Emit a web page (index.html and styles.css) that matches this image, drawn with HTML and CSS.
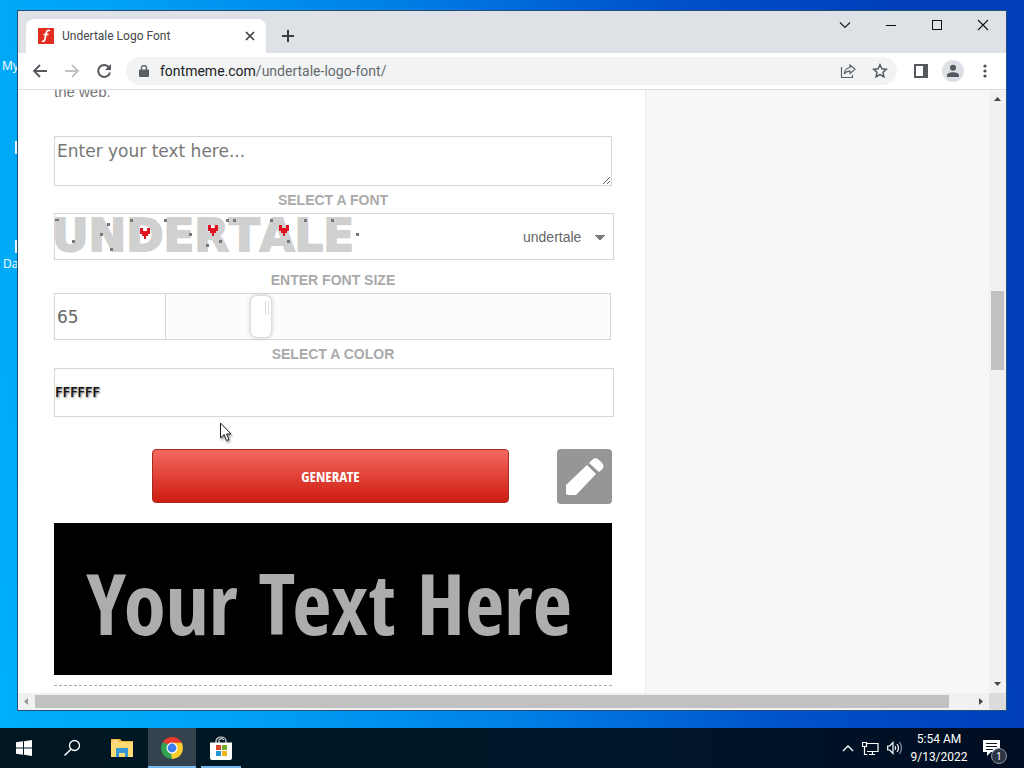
FILE: index.html
```html
<!DOCTYPE html>
<html lang="en">
<head>
<meta charset="utf-8">
<title>Undertale Logo Font</title>
<link rel="stylesheet" href="styles.css">
</head>
<body>
<div class="desktop">
  <span class="desk-label desk-first">My</span>
  <span class="desk-file desk-file-a"></span>
  <span class="desk-file desk-file-b"></span>
  <span class="desk-label desk-second">Da</span>

  <section class="window">
    <header class="tabstrip">
      <div class="tab">
        <svg class="favicon" width="16" height="16" viewBox="0 0 16 16"><rect width="16" height="16" fill="#e02f1f"/><path d="M12 2.800C9.400 1.600 8.500 3.500 8 6L7 11c-.4 2-1.200 2.900-3 2M5.500 6.500h5" fill="none" stroke="#fff" stroke-width="1.700"/></svg>
        <span class="tab-title">Undertale Logo Font</span>
        <button class="icon-btn tab-close" aria-label="Close tab"><svg width="10" height="10" viewBox="0 0 10 10"><path d="M1 1l8 8M9 1L1 9" stroke="#3c4043" stroke-width="1.700"/></svg></button>
      </div>
      <button class="icon-btn new-tab" aria-label="New tab"><svg width="12" height="12" viewBox="0 0 12 12"><path d="M6 0v12M0 6h12" stroke="#3c4043" stroke-width="2"/></svg></button>
      <div class="caption">
        <button class="icon-btn" aria-label="Search tabs"><svg width="12" height="12" viewBox="0 0 12 12"><path d="M1 3.500l5 5 5-5" fill="none" stroke="#222" stroke-width="1.200"/></svg></button>
        <button class="icon-btn" aria-label="Minimize"><svg width="12" height="12" viewBox="0 0 12 12"><path d="M1 6.500h10" stroke="#111"/></svg></button>
        <button class="icon-btn" aria-label="Maximize"><svg width="12" height="12" viewBox="0 0 12 12"><rect x="1.500" y="1.500" width="9" height="9" fill="none" stroke="#111"/></svg></button>
        <button class="icon-btn" aria-label="Close"><svg width="12" height="12" viewBox="0 0 12 12"><path d="M1 1l10 10M11 1L1 11" stroke="#111" stroke-width="1.100"/></svg></button>
      </div>
    </header>

    <nav class="toolbar">
      <button class="icon-btn tool" aria-label="Back"><svg width="16" height="16" viewBox="0 0 16 16"><path d="M15 8H2M8 2L2 8l6 6" fill="none" stroke="#55585c" stroke-width="1.800"/></svg></button>
      <button class="icon-btn tool" aria-label="Forward"><svg width="16" height="16" viewBox="0 0 16 16"><path d="M1 8h13M8 2l6 6-6 6" fill="none" stroke="#bfc1c4" stroke-width="1.800"/></svg></button>
      <button class="icon-btn tool" aria-label="Reload"><svg width="16" height="16" viewBox="0 0 16 16"><path d="M13.200 4.600A6 6 0 1 0 14 9.500" fill="none" stroke="#55585c" stroke-width="2"/><path d="M15 1v6H9z" fill="#55585c"/></svg></button>
      <div class="omnibox">
        <svg width="10" height="12" viewBox="0 0 10 12"><path d="M1 4.500h8a1 1 0 0 1 1 1V11a1 1 0 0 1-1 1H1a1 1 0 0 1-1-1V5.500a1 1 0 0 1 1-1z" fill="#5a5d61"/><path d="M2.500 5V3a2.500 2.500 0 0 1 5 0v2" fill="none" stroke="#5a5d61" stroke-width="1.300"/></svg>
        <span class="url">fontmeme.com<span class="path">/undertale-logo-font/</span></span>
        <button class="icon-btn share" aria-label="Share"><svg width="16" height="16" viewBox="0 0 16 16"><path d="M1.500 4v10.500h11V12" fill="none" stroke="#5f6368" stroke-width="1.200"/><path d="M10 2l5 4.200-5 4.200V8.200C7 8 5.500 9 4.200 11 4.500 7.500 6.500 5 10 4.500z" fill="none" stroke="#5f6368" stroke-width="1.200"/></svg></button>
        <button class="icon-btn star" aria-label="Bookmark"><svg width="16" height="16" viewBox="0 0 16 16"><path d="M8 1.800l1.900 4 4.400.5-3.300 3 .9 4.400L8 11.500l-3.900 2.200.9-4.400-3.300-3 4.400-.5z" fill="none" stroke="#55585c" stroke-width="1.500"/></svg></button>
      </div>
      <button class="icon-btn tool" aria-label="Side panel"><svg width="14" height="14" viewBox="0 0 14 14"><path d="M1 1h12v12H1z" fill="none" stroke="#55585c" stroke-width="2"/><path d="M9 1h4v12H9z" fill="#55585c"/></svg></button>
      <button class="icon-btn tool" aria-label="Profile"><svg width="22" height="22" viewBox="0 0 22 22"><circle cx="11" cy="11" r="11" fill="#dfe0e6"/><circle cx="11" cy="7.800" r="3" fill="#55585f"/><path d="M5 17v-1.800c0-2 3-3 6-3s6 1 6 3V17z" fill="#55585f"/></svg></button>
      <button class="icon-btn tool" aria-label="Menu"><svg width="4" height="14" viewBox="0 0 4 14"><g fill="#4c4f53"><circle cx="2" cy="2" r="1.600"/><circle cx="2" cy="7" r="1.600"/><circle cx="2" cy="12" r="1.600"/></g></svg></button>
    </nav>

    <div class="viewport">
      <div class="page">
        <main class="main">
          <p class="intro">the web.</p>
          <textarea class="box entry" aria-label="Text" placeholder="Enter your text here..."></textarea>
          <label class="heading" for="font">SELECT A FONT</label>
          <div class="box font-field">
            <div class="preview">UNDERTALE
              <svg class="hearts" width="306" height="34" viewBox="0 0 306 34" shape-rendering="crispEdges">
                <defs><path id="heart" d="M0 0h3v3h4V0h3v6H8v2H6v3H4V8H2V6H0z" fill="#e01420"/></defs>
                <use href="#heart" x="86" y="10"/><use href="#heart" x="154" y="7"/><use href="#heart" x="225" y="7"/>
                <path d="M1 1h4v2H1zM18 22h3v3h-3zM53 5h3v3h-3zM46 15h3v3h-3zM56 30h3v3h-3zM76 1h3v3h-3zM110 1h3v3h-3zM135 15h3v3h-3zM172 1h3v3h-3zM152 26h3v3h-3zM165 22h3v3h-3zM179 1h3v3h-3zM216 1h3v3h-3zM233 22h3v3h-3zM250 1h3v3h-3zM277 1h3v3h-3zM302 15h3v3h-3z" fill="#777"/>
              </svg>
            </div>
            <select id="font" class="font-select"><option>undertale</option></select>
          </div>
          <label class="heading heading-size" for="size">ENTER FONT SIZE</label>
          <div class="size-row">
            <input id="size" class="size-input" type="text" value="65">
            <input class="slider" type="range" min="10" max="300" value="68" aria-label="Font size">
          </div>
          <label class="heading heading-color" for="color">SELECT A COLOR</label>
          <input id="color" class="box color-input" type="text" value="FFFFFF">
          <div class="actions">
            <button class="generate">GENERATE</button>
            <button class="edit" aria-label="Edit"><svg width="40" height="40" viewBox="0 0 40 40"><g fill="#fff"><path d="M1 28L22 8l9 9-20 21H3a2 2 0 0 1-2-2z"/><path d="M24 6l3-3c2.500-2.500 5-2 7 0l3 3c2 2 2 4.500 0 6.500L34 15z"/></g></svg></button>
          </div>
          <div class="banner">Your Text Here</div>
          <hr class="rule">
        </main>
        <aside class="side"></aside>
      </div>
      <div class="vscroll">
        <svg width="7" height="4" viewBox="0 0 7 4"><path d="M0 4l3.500-4L7 4z" fill="#444"/></svg>
        <span class="track-before"></span><span class="vthumb"></span><span class="track-after"></span>
        <svg width="7" height="4" viewBox="0 0 7 4"><path d="M0 0l3.500 4L7 0z" fill="#444"/></svg>
      </div>
      <div class="hscroll">
        <svg width="4" height="7" viewBox="0 0 4 7"><path d="M4 0L0 3.500 4 7z" fill="#999"/></svg>
        <span class="hthumb"></span><span class="hrest"></span>
        <svg width="4" height="7" viewBox="0 0 4 7"><path d="M0 0l4 3.500L0 7z" fill="#444"/></svg>
      </div>
      <div class="corner"></div>
    </div>
  </section>
  <svg class="cursor" width="14" height="21" viewBox="0 0 14 21"><path d="M1.500 1v15l3.500-3.500 2.500 6 2.500-1L7.500 12H12z" fill="#fff" stroke="#222"/></svg>
</div>

<footer class="taskbar">
  <button class="task" aria-label="Start"><svg width="16" height="16" viewBox="0 0 16 16"><path d="M0 2.300L7 1.300v6.200H0zM8 1.200L16 0v7.500H8zM0 8.500h7v6.200l-7-1zM8 8.500h8V16l-8-1.200z" fill="#fff"/></svg></button>
  <button class="task" aria-label="Search"><svg width="18" height="18" viewBox="0 0 18 18"><circle cx="11.500" cy="6.500" r="5" fill="none" stroke="#fff" stroke-width="1.300"/><path d="M8 10.200L1.500 16.500" stroke="#fff" stroke-width="1.500"/></svg></button>
  <button class="task task-wide" aria-label="File Explorer"><svg width="22" height="18" viewBox="0 0 22 18"><path d="M0 0h9l2 2h11v16H0z" fill="#f3b93e"/><path d="M0 3h22v15H0z" fill="#ffda72"/><path d="M5 9h12v9h-3v-4H8v4H5z" fill="#3597d3"/><path d="M2 2h5" stroke="#fff"/></svg></button>
  <button class="task task-active" aria-label="Chrome"><svg width="24" height="24" viewBox="0 0 24 24"><path d="M12 12L2.500 6.500A11 11 0 0 1 21.500 6.500z" fill="#e33b2e"/><path d="M12 12L21.500 6.500A11 11 0 0 1 12 23z" fill="#fccd2c"/><path d="M12 12v11A11 11 0 0 1 2.500 6.500z" fill="#31a350"/><path d="M12 6.500h9.500L17 14z" fill="#fccd2c"/><path d="M12 6.500h9.500A11 11 0 0 0 12 1z" fill="#e33b2e"/><path d="M7.200 14.700L2.500 6.500 8 8z" fill="#31a350"/><path d="M16.800 14.700L12 23l-1-6z" fill="#fccd2c"/><circle cx="12" cy="12" r="5.500" fill="#fff"/><circle cx="12" cy="12" r="4.400" fill="#3b7ded"/></svg></button>
  <button class="task task-open" aria-label="Store"><svg width="24" height="24" viewBox="0 0 24 24"><path d="M7 7V5a5 4 0 0 1 10 0v2M10 7V4a3 3 0 0 1 5 0" fill="none" stroke="#ddd" stroke-width="1.200"/><path d="M1 6.500h22V22a2 2 0 0 1-2 2H3a2 2 0 0 1-2-2z" fill="#fff"/><path d="M7 9h5v5H7z" fill="#d9482e"/><path d="M13 9h5v5h-5z" fill="#78ab2c"/><path d="M7 15h5v5H7z" fill="#2594d2"/><path d="M13 15h5v5h-5z" fill="#efb31d"/></svg></button>
  <div class="tray">
    <svg width="12" height="8" viewBox="0 0 12 8"><path d="M1 7l5-5 5 5" fill="none" stroke="#fff" stroke-width="1.400"/></svg>
    <svg width="17" height="15" viewBox="0 0 17 15"><path d="M5 2.500h11v8H5M7 13.500h6M10.500 10.500v3M.5 1.500h4v4h-4zM2.500 5.500v8h3" fill="none" stroke="#fff" stroke-width="1.200"/></svg>
    <svg width="16" height="14" viewBox="0 0 16 14"><path d="M.7 5h2L6 1.500v11L2.700 9h-2z" fill="none" stroke="#fff" stroke-width="1.200"/><path d="M8 5q1.500 2 0 4M10 3q3 4 0 8" fill="none" stroke="#fff" stroke-width="1.200"/><path d="M12.500 1q4 6 0 12" fill="none" stroke="#8190a5" stroke-width="1.200"/></svg>
    <div class="clock"><span>5:54 AM</span><span>9/13/2022</span></div>
    <div class="notice"><svg width="17" height="16" viewBox="0 0 17 16"><path d="M0 0h17v12H8l-4 4v-4H0z" fill="#fff"/><path d="M3 3.500h11M3 6.500h11M3 9.500h7" stroke="#0a1524"/></svg><span class="badge">1</span></div>
  </div>
</footer>
</body>
</html>
```

FILE: styles.css
```css
* { box-sizing: border-box; }
body {
  margin: 0;
  height: 100vh;
  display: flex;
  flex-direction: column;
  overflow: hidden;
  font-family: "Open Sans", "Noto Sans", sans-serif;
}
svg { display: block; flex: none; }
button { font: inherit; cursor: pointer; }
.desktop {
  flex: 1;
  min-height: 0;
  position: relative;
  display: flex;
  padding: 10px 17px 17px;
  background: linear-gradient(80deg, #00b0fa, #00a2f6 20%, #0080e6 45%, #0052cc 68%, #003db9 90%);
}
.desk-label { position: absolute; color: #fff; font-size: 12px; line-height: 16px; }
.desk-first { left: 2px; top: 58px; }
.desk-second { left: 3px; top: 256px; }
.desk-file { position: absolute; left: 15px; width: 4px; height: 13px; background: #e4f3ff; }
.desk-file-a { top: 141px; }
.desk-file-b { top: 240px; }
.window {
  flex: 1;
  min-width: 0;
  position: relative;
  display: flex;
  flex-direction: column;
  border: 1px solid #234e78;
  background: #fff;
}
.icon-btn {
  display: flex;
  align-items: center;
  justify-content: center;
  padding: 0;
  border: 0;
  background: none;
}
.tabstrip { height: 42px; display: flex; padding: 8px 0 0 8px; background: #dee1e6; }
.tab {
  width: 240px;
  display: flex;
  align-items: center;
  gap: 8px;
  padding: 0 10px 0 12px;
  border-radius: 8px 8px 0 0;
  background: #fff;
}
.tab-title { flex: 1; font: 12px/16px Roboto, "Open Sans", sans-serif; color: #45484c; }
.tab-close { width: 12px; height: 16px; }
.new-tab { width: 44px; }
.caption { display: flex; height: 14px; margin-left: auto; }
.caption .icon-btn { width: 46px; height: 12px; }
.toolbar {
  height: 37px;
  display: flex;
  align-items: center;
  padding: 0 5px 0 6px;
  border-bottom: 1px solid #dadce0;
}
.tool { width: 32px; height: 28px; }
.omnibox {
  flex: 1;
  display: flex;
  align-items: center;
  height: 28px;
  margin: 0 8px 0 6px;
  padding: 0 1px 0 13px;
  border-radius: 14px;
  background: #f1f3f4;
}
.url { flex: 1; margin-left: 11px; font: 14px/20px Roboto, "Open Sans", sans-serif; color: #202124; }
.path { color: #666a6e; }
.share, .star { width: 32px; height: 28px; }
.viewport {
  flex: 1;
  min-height: 0;
  display: grid;
  grid-template: minmax(0, 1fr) 17px / minmax(0, 1fr) 17px;
}
.page { display: grid; grid-template-columns: 627fr 344fr; overflow: hidden; }
.main { padding: 0 33px 0 36px; }
.side { background: #f7f7f7; border-left: 1px solid #eee; }
.intro {
  margin: -8px 0 34px;
  font: 15px/20px "Liberation Sans", Arial, sans-serif;
  color: #777;
}
.box { border: 1px solid #d6d6d6; background: #fff; }
.entry {
  display: block;
  width: 100%;
  height: 50px;
  padding: 2px;
  font: 17px/24px "DejaVu Sans", Verdana, sans-serif;
  color: #666;
}
.entry::placeholder { color: #777; }
.heading {
  display: block;
  height: 27px;
  font: bold 14px/28px "Liberation Sans", Arial, sans-serif;
  color: #aaa;
  text-align: center;
}
.heading-size { height: 33px; line-height: 40px; }
.heading-color { height: 28px; }
.font-field { display: flex; align-items: center; height: 47px; margin-right: -2px; }
.preview {
  position: relative;
  height: 34px;
  align-self: flex-start;
  margin: 4px 0 0 -3px;
  font: bold 45px/35px "DejaVu Sans", Verdana, sans-serif;
  font-kerning: none;
  color: #d0d0d0;
  -webkit-text-stroke: 2px #d0d0d0;
}
.hearts { position: absolute; left: 2px; top: 0; }
.font-select {
  appearance: none;
  width: 90px;
  height: 32px;
  margin-left: auto;
  padding: 0;
  border: 0;
  font: 14px/20px "Liberation Sans", Arial, sans-serif;
  color: #666;
  background: conic-gradient(from -45deg at 50% 100%, #777 90deg, transparent 0) 72px 14px / 10px 5px no-repeat;
}
.size-row { display: flex; height: 47px; border: 1px solid #d6d6d6; margin-right: 1px; }
.size-input {
  width: 20%;
  padding: 0 2px;
  border: 0;
  border-right: 1px solid #d6d6d6;
  font: 17px/22px "DejaVu Sans", Verdana, sans-serif;
  color: #666;
}
.slider { appearance: none; flex: 1; min-width: 0; height: 100%; margin: 0; background: #fcfcfc; }
.slider::-webkit-slider-thumb {
  appearance: none;
  width: 22px;
  height: 43px;
  border: 1px solid #ddd;
  border-radius: 7px;
  background: linear-gradient(#ddd, #ddd) 14px 5px / 1px 14px no-repeat,
    linear-gradient(#ddd, #ddd) 17px 5px / 1px 14px no-repeat, #fff;
  box-shadow: 0 0 4px #ccc;
}
.color-input {
  display: block;
  width: calc(100% + 2px);
  height: 49px;
  padding: 0 0 2px;
  font: 600 14px/20px "Open Sans", sans-serif;
  color: #111;
  text-shadow: 1px 1px 2px #777;
}
.actions { display: flex; align-items: flex-start; justify-content: flex-end; gap: 48px; margin-top: 32px; }
.generate {
  width: 64%;
  height: 54px;
  border: 1px solid #a52a22;
  border-radius: 4px;
  background: linear-gradient(#f3695e, #cf1b10);
  color: #fff;
  font: bold 15px/24px "Open Sans Condensed", "Liberation Sans Narrow", "DejaVu Sans Condensed", sans-serif;
}
.edit {
  display: flex;
  align-items: center;
  justify-content: center;
  width: 55px;
  height: 55px;
  padding: 0;
  border: 0;
  border-radius: 4px;
  background: #969696;
}
.banner {
  height: 152px;
  margin-top: 19px;
  padding-right: 8px;
  background: #000;
  color: #adadad;
  font: bold 85px/158px "Open Sans Condensed", "Liberation Sans Narrow", "DejaVu Sans Condensed", sans-serif;
  text-align: center;
  white-space: nowrap;
}
.rule { margin: 10px 0 0; border: 0; border-top: 1px dashed #aaa; }
.vscroll {
  display: flex;
  flex-direction: column;
  align-items: center;
  padding: 7px 0;
  background: #f1f1f1;
}
.track-before { flex: 190; }
.vthumb { flex: 79; width: 13px; background: #c1c1c1; }
.track-after { flex: 312; }
.hscroll { display: flex; align-items: center; gap: 7px; padding: 0 6px; background: #f1f1f1; }
.hthumb { flex: 913; height: 13px; background: #c1c1c1; }
.hrest { flex: 16; }
.corner { background: #dcdcdc; }
.cursor { position: absolute; left: 219px; top: 422px; filter: drop-shadow(1px 2px 1px #999); }
.taskbar { height: 40px; display: flex; background: linear-gradient(90deg, #001722, #00172a 60%, #000c22); }
.task {
  width: 48px;
  display: flex;
  align-items: center;
  justify-content: center;
  padding: 0;
  border: 0;
  background: none;
}
.task-wide { width: 52px; }
.task-active { background: #34434e; border-bottom: 2px solid #76b9ed; border-top: 2px solid transparent; }
.task-open { width: 40px; margin-left: 5px; border-bottom: 2px solid #76b9ed; border-top: 2px solid transparent; }
.tray { display: flex; align-items: center; gap: 8px; margin-left: auto; padding-right: 24px; color: #fff; }
.clock { display: flex; flex-direction: column; align-items: center; width: 56px; font: 12px/18px Roboto, "Open Sans", sans-serif; white-space: nowrap; }
.notice { position: relative; margin-left: 8px; }
.badge {
  position: absolute;
  left: 8px;
  top: 8px;
  width: 16px;
  height: 16px;
  border: 1px solid #8b95a1;
  border-radius: 50%;
  background: #2a3443;
  font-size: 11px;
  line-height: 14px;
  text-align: center;
}
```
